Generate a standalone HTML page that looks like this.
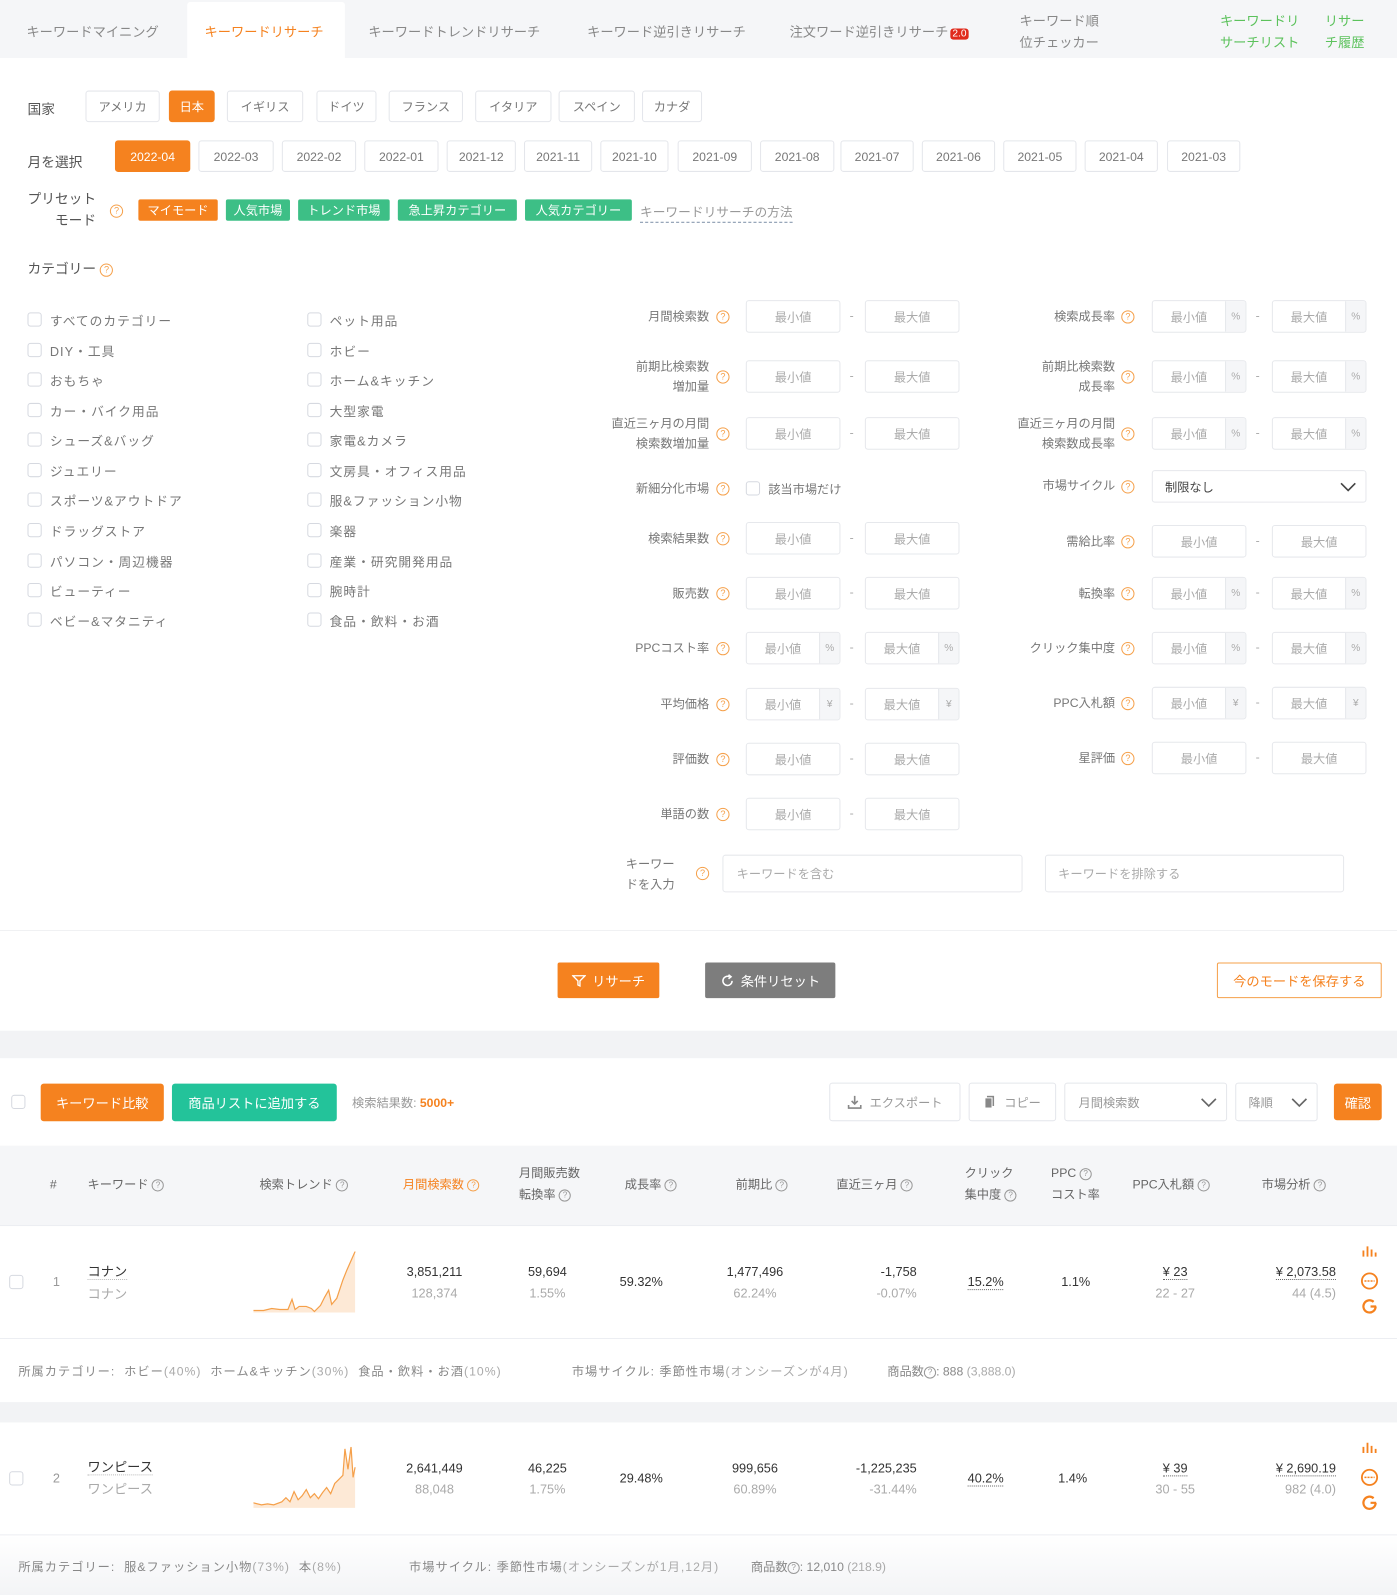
<!DOCTYPE html>
<html><head><meta charset="utf-8">
<style>
*{box-sizing:border-box;margin:0;padding:0}
html,body{width:1397px;height:1595px;overflow:hidden;background:#fff}
body{font-family:"Liberation Sans","Noto Sans CJK JP",sans-serif;font-size:12px;color:#666}
#w{position:absolute;left:0;top:0;width:1373px;height:1568px;transform:scale(1.01748);transform-origin:0 0}
.a{position:absolute;white-space:nowrap}
.btn{position:absolute;height:31px;border:1px solid #e4e6eb;border-radius:3px;display:flex;align-items:center;justify-content:center;color:#777;font-size:12px;background:#fff}
.on{background:#f5821f;border-color:#f5821f;color:#fff}
.tg{position:absolute;top:196px;height:21px;color:#fff;font-size:12px;display:flex;align-items:center;justify-content:center;border-radius:2px;background:#3dbf86}
.cb{position:absolute;width:14px;height:14px;border:1px solid #d6d9e0;border-radius:3px;background:#fff}
.ck{position:absolute;font-size:12.5px;color:#777;letter-spacing:1px}
.q{display:inline-block;width:13px;height:13px;border:1px solid #f5a04a;border-radius:50%;color:#f5a04a;font-size:9px;line-height:11px;text-align:center;vertical-align:middle}
.qg{display:inline-block;width:12px;height:12px;border:1px solid #999;border-radius:50%;color:#999;font-size:8px;line-height:10px;text-align:center;vertical-align:middle}
.lb{position:absolute;text-align:right;font-size:12px;color:#777;line-height:20px}
.in{position:absolute;height:32px;border:1px solid #e6e8ec;border-radius:3px;display:flex;align-items:center;justify-content:center;color:#aaa;font-size:12px;background:#fff;overflow:hidden}
.in .s{position:absolute;right:0;top:0;bottom:0;width:20px;background:#f5f6f8;border-left:1px solid #e6e8ec;display:flex;align-items:center;justify-content:center;font-size:10px;color:#aaa}
.d{position:absolute;color:#aaa;font-size:12px}
.th{position:absolute;font-size:12px;color:#666;line-height:21px}
.num{position:absolute;font-size:12.5px;color:#333;line-height:21px}
.sub{color:#aaa}
.dot{border-bottom:1px dotted #666}
.ft{letter-spacing:1px}
</style></head><body><div id="w">

<!-- tabs -->
<div class="a" style="left:0;top:0;width:1373px;height:57px;background:#f5f6f8"></div>
<div class="a" style="left:184px;top:2px;width:155px;height:55px;background:#fff;border-radius:3px 3px 0 0"></div>
<div class="a" style="left:26px;top:21px;font-size:13px;color:#888">キーワードマイニング</div>
<div class="a" style="left:201px;top:21px;font-size:13px;color:#f5821f">キーワードリサーチ</div>
<div class="a" style="left:362px;top:21px;font-size:13px;color:#888">キーワードトレンドリサーチ</div>
<div class="a" style="left:577px;top:21px;font-size:13px;color:#888">キーワード逆引きリサーチ</div>
<div class="a" style="left:776px;top:21px;font-size:13px;color:#888">注文ワード逆引きリサーチ<span style="background:#e02a1c;color:#fff;font-size:10px;border-radius:3px;padding:0 2px;margin-left:2px">2.0</span></div>
<div class="a" style="left:1002px;top:10px;font-size:13px;color:#888;line-height:21px">キーワード順<br>位チェッカー</div>
<div class="a" style="left:1199px;top:10px;font-size:13px;color:#5cc25c;line-height:21px">キーワードリ<br>サーチリスト</div>
<div class="a" style="left:1302px;top:10px;font-size:13px;color:#5cc25c;line-height:21px">リサー<br>チ履歴</div>

<!-- country -->
<div class="a" style="left:27px;top:96px;font-size:13.5px;color:#555">国家</div>
<div class="btn" style="left:84px;top:89px;width:73px">アメリカ</div>
<div class="btn on" style="left:166px;top:89px;width:45px">日本</div>
<div class="btn" style="left:223px;top:89px;width:75px">イギリス</div>
<div class="btn" style="left:311px;top:89px;width:59px">ドイツ</div>
<div class="btn" style="left:382px;top:89px;width:73px">フランス</div>
<div class="btn" style="left:467px;top:89px;width:75px">イタリア</div>
<div class="btn" style="left:549px;top:89px;width:75px">スペイン</div>
<div class="btn" style="left:631px;top:89px;width:59px">カナダ</div>

<!-- months -->
<div class="a" style="left:27px;top:148px;font-size:13.5px;color:#555">月を選択</div>
<div class="btn on" style="left:113px;top:138px;width:74px">2022-04</div>
<div class="btn" style="left:195px;top:138px;width:74px">2022-03</div>
<div class="btn" style="left:277px;top:138px;width:73px">2022-02</div>
<div class="btn" style="left:358px;top:138px;width:73px">2022-01</div>
<div class="btn" style="left:439px;top:138px;width:68px">2021-12</div>
<div class="btn" style="left:515px;top:138px;width:67px">2021-11</div>
<div class="btn" style="left:590px;top:138px;width:67px">2021-10</div>
<div class="btn" style="left:666px;top:138px;width:73px">2021-09</div>
<div class="btn" style="left:747px;top:138px;width:73px">2021-08</div>
<div class="btn" style="left:826px;top:138px;width:72px">2021-07</div>
<div class="btn" style="left:906px;top:138px;width:72px">2021-06</div>
<div class="btn" style="left:986px;top:138px;width:72px">2021-05</div>
<div class="btn" style="left:1066px;top:138px;width:72px">2021-04</div>
<div class="btn" style="left:1147px;top:138px;width:72px">2021-03</div>

<!-- preset -->
<div class="a" style="left:27px;top:185px;font-size:13.5px;color:#555;line-height:21px;text-align:right">プリセット<br>　モード</div>
<div class="a" style="left:108px;top:200px"><span class="q">?</span></div>
<div class="tg" style="left:136px;width:78px;background:#f5821f">マイモード</div>
<div class="tg" style="left:222px;width:63px">人気市場</div>
<div class="tg" style="left:293px;width:90px">トレンド市場</div>
<div class="tg" style="left:391px;width:117px">急上昇カテゴリー</div>
<div class="tg" style="left:516px;width:105px">人気カテゴリー</div>
<div class="a" style="left:629px;top:198px;color:#999;font-size:12.5px;border-bottom:1px dashed #8a9bb0;padding-bottom:1px">キーワードリサーチの方法</div>

<div class="a" style="left:27px;top:253px;font-size:13.5px;color:#555">カテゴリー <span class="q">?</span></div>

<!-- categories -->
<div class="cb" style="left:27px;top:307px"></div><div class="ck" style="left:49px;top:305px">すべてのカテゴリー</div>
<div class="cb" style="left:27px;top:337px"></div><div class="ck" style="left:49px;top:335px">DIY・工具</div>
<div class="cb" style="left:27px;top:366px"></div><div class="ck" style="left:49px;top:364px">おもちゃ</div>
<div class="cb" style="left:27px;top:396px"></div><div class="ck" style="left:49px;top:394px">カー・バイク用品</div>
<div class="cb" style="left:27px;top:425px"></div><div class="ck" style="left:49px;top:423px">シューズ&amp;バッグ</div>
<div class="cb" style="left:27px;top:455px"></div><div class="ck" style="left:49px;top:453px">ジュエリー</div>
<div class="cb" style="left:27px;top:484px"></div><div class="ck" style="left:49px;top:482px">スポーツ&amp;アウトドア</div>
<div class="cb" style="left:27px;top:514px"></div><div class="ck" style="left:49px;top:512px">ドラッグストア</div>
<div class="cb" style="left:27px;top:544px"></div><div class="ck" style="left:49px;top:542px">パソコン・周辺機器</div>
<div class="cb" style="left:27px;top:573px"></div><div class="ck" style="left:49px;top:571px">ビューティー</div>
<div class="cb" style="left:27px;top:602px"></div><div class="ck" style="left:49px;top:600px">ベビー&amp;マタニティ</div>
<div class="cb" style="left:302px;top:307px"></div><div class="ck" style="left:324px;top:305px">ペット用品</div>
<div class="cb" style="left:302px;top:337px"></div><div class="ck" style="left:324px;top:335px">ホビー</div>
<div class="cb" style="left:302px;top:366px"></div><div class="ck" style="left:324px;top:364px">ホーム&amp;キッチン</div>
<div class="cb" style="left:302px;top:396px"></div><div class="ck" style="left:324px;top:394px">大型家電</div>
<div class="cb" style="left:302px;top:425px"></div><div class="ck" style="left:324px;top:423px">家電&amp;カメラ</div>
<div class="cb" style="left:302px;top:455px"></div><div class="ck" style="left:324px;top:453px">文房具・オフィス用品</div>
<div class="cb" style="left:302px;top:484px"></div><div class="ck" style="left:324px;top:482px">服&amp;ファッション小物</div>
<div class="cb" style="left:302px;top:514px"></div><div class="ck" style="left:324px;top:512px">楽器</div>
<div class="cb" style="left:302px;top:544px"></div><div class="ck" style="left:324px;top:542px">産業・研究開発用品</div>
<div class="cb" style="left:302px;top:573px"></div><div class="ck" style="left:324px;top:571px">腕時計</div>
<div class="cb" style="left:302px;top:602px"></div><div class="ck" style="left:324px;top:600px">食品・飲料・お酒</div>

<!-- LEFT filters -->
<div class="lb" style="right:676px;top:301px">月間検索数</div><div class="a" style="left:704px;top:304px"><span class="q">?</span></div>
<div class="in" style="left:733px;top:295px;width:93px">最小値</div><div class="d" style="left:835px;top:303px">-</div><div class="in" style="left:850px;top:295px;width:93px">最大値</div>

<div class="lb" style="right:676px;top:350px">前期比検索数<br>増加量</div><div class="a" style="left:704px;top:363px"><span class="q">?</span></div>
<div class="in" style="left:733px;top:354px;width:93px">最小値</div><div class="d" style="left:835px;top:362px">-</div><div class="in" style="left:850px;top:354px;width:93px">最大値</div>

<div class="lb" style="right:676px;top:406px">直近三ヶ月の月間<br>検索数増加量</div><div class="a" style="left:704px;top:419px"><span class="q">?</span></div>
<div class="in" style="left:733px;top:410px;width:93px">最小値</div><div class="d" style="left:835px;top:418px">-</div><div class="in" style="left:850px;top:410px;width:93px">最大値</div>

<div class="lb" style="right:676px;top:470px">新細分化市場</div><div class="a" style="left:704px;top:473px"><span class="q">?</span></div>
<div class="cb" style="left:733px;top:473px"></div><div class="a" style="left:755px;top:472px;color:#777">該当市場だけ</div>

<div class="lb" style="right:676px;top:519px">検索結果数</div><div class="a" style="left:704px;top:522px"><span class="q">?</span></div>
<div class="in" style="left:733px;top:513px;width:93px">最小値</div><div class="d" style="left:835px;top:521px">-</div><div class="in" style="left:850px;top:513px;width:93px">最大値</div>

<div class="lb" style="right:676px;top:573px">販売数</div><div class="a" style="left:704px;top:576px"><span class="q">?</span></div>
<div class="in" style="left:733px;top:567px;width:93px">最小値</div><div class="d" style="left:835px;top:575px">-</div><div class="in" style="left:850px;top:567px;width:93px">最大値</div>

<div class="lb" style="right:676px;top:627px">PPCコスト率</div><div class="a" style="left:704px;top:630px"><span class="q">?</span></div>
<div class="in" style="left:733px;top:621px;width:93px;padding-right:20px">最小値<span class="s">%</span></div><div class="d" style="left:835px;top:629px">-</div><div class="in" style="left:850px;top:621px;width:93px;padding-right:20px">最大値<span class="s">%</span></div>

<div class="lb" style="right:676px;top:682px">平均価格</div><div class="a" style="left:704px;top:685px"><span class="q">?</span></div>
<div class="in" style="left:733px;top:676px;width:93px;padding-right:20px">最小値<span class="s">¥</span></div><div class="d" style="left:835px;top:684px">-</div><div class="in" style="left:850px;top:676px;width:93px;padding-right:20px">最大値<span class="s">¥</span></div>

<div class="lb" style="right:676px;top:736px">評価数</div><div class="a" style="left:704px;top:739px"><span class="q">?</span></div>
<div class="in" style="left:733px;top:730px;width:93px">最小値</div><div class="d" style="left:835px;top:738px">-</div><div class="in" style="left:850px;top:730px;width:93px">最大値</div>

<div class="lb" style="right:676px;top:790px">単語の数</div><div class="a" style="left:704px;top:793px"><span class="q">?</span></div>
<div class="in" style="left:733px;top:784px;width:93px">最小値</div><div class="d" style="left:835px;top:792px">-</div><div class="in" style="left:850px;top:784px;width:93px">最大値</div>

<div class="lb" style="left:615px;top:839px;text-align:left">キーワー<br>ドを入力</div><div class="a" style="left:684px;top:851px"><span class="q">?</span></div>
<div class="in" style="left:710px;top:840px;width:295px;height:37px;justify-content:flex-start;padding-left:13px">キーワードを含む</div>
<div class="in" style="left:1027px;top:840px;width:294px;height:37px;justify-content:flex-start;padding-left:12px">キーワードを排除する</div>

<!-- RIGHT filters -->
<div class="lb" style="right:277px;top:301px">検索成長率</div><div class="a" style="left:1102px;top:304px"><span class="q">?</span></div>
<div class="in" style="left:1132px;top:295px;width:93px;padding-right:20px">最小値<span class="s">%</span></div><div class="d" style="left:1234px;top:303px">-</div><div class="in" style="left:1250px;top:295px;width:93px;padding-right:20px">最大値<span class="s">%</span></div>

<div class="lb" style="right:277px;top:350px">前期比検索数<br>成長率</div><div class="a" style="left:1102px;top:363px"><span class="q">?</span></div>
<div class="in" style="left:1132px;top:354px;width:93px;padding-right:20px">最小値<span class="s">%</span></div><div class="d" style="left:1234px;top:362px">-</div><div class="in" style="left:1250px;top:354px;width:93px;padding-right:20px">最大値<span class="s">%</span></div>

<div class="lb" style="right:277px;top:406px">直近三ヶ月の月間<br>検索数成長率</div><div class="a" style="left:1102px;top:419px"><span class="q">?</span></div>
<div class="in" style="left:1132px;top:410px;width:93px;padding-right:20px">最小値<span class="s">%</span></div><div class="d" style="left:1234px;top:418px">-</div><div class="in" style="left:1250px;top:410px;width:93px;padding-right:20px">最大値<span class="s">%</span></div>

<div class="lb" style="right:277px;top:467px">市場サイクル</div><div class="a" style="left:1102px;top:471px"><span class="q">?</span></div>
<div class="in" style="left:1132px;top:462px;width:211px;justify-content:flex-start;padding-left:12px;color:#444">制限なし
<svg style="position:absolute;right:8px;top:9px" width="18" height="12" viewBox="0 0 18 12"><path d="M2 3l7 7 7-7" fill="none" stroke="#444" stroke-width="1.6"/></svg></div>

<div class="lb" style="right:277px;top:522px">需給比率</div><div class="a" style="left:1102px;top:525px"><span class="q">?</span></div>
<div class="in" style="left:1132px;top:516px;width:93px">最小値</div><div class="d" style="left:1234px;top:524px">-</div><div class="in" style="left:1250px;top:516px;width:93px">最大値</div>

<div class="lb" style="right:277px;top:573px">転換率</div><div class="a" style="left:1102px;top:576px"><span class="q">?</span></div>
<div class="in" style="left:1132px;top:567px;width:93px;padding-right:20px">最小値<span class="s">%</span></div><div class="d" style="left:1234px;top:575px">-</div><div class="in" style="left:1250px;top:567px;width:93px;padding-right:20px">最大値<span class="s">%</span></div>

<div class="lb" style="right:277px;top:627px">クリック集中度</div><div class="a" style="left:1102px;top:630px"><span class="q">?</span></div>
<div class="in" style="left:1132px;top:621px;width:93px;padding-right:20px">最小値<span class="s">%</span></div><div class="d" style="left:1234px;top:629px">-</div><div class="in" style="left:1250px;top:621px;width:93px;padding-right:20px">最大値<span class="s">%</span></div>

<div class="lb" style="right:277px;top:681px">PPC入札額</div><div class="a" style="left:1102px;top:684px"><span class="q">?</span></div>
<div class="in" style="left:1132px;top:675px;width:93px;padding-right:20px">最小値<span class="s">¥</span></div><div class="d" style="left:1234px;top:683px">-</div><div class="in" style="left:1250px;top:675px;width:93px;padding-right:20px">最大値<span class="s">¥</span></div>

<div class="lb" style="right:277px;top:735px">星評価</div><div class="a" style="left:1102px;top:738px"><span class="q">?</span></div>
<div class="in" style="left:1132px;top:729px;width:93px">最小値</div><div class="d" style="left:1234px;top:737px">-</div><div class="in" style="left:1250px;top:729px;width:93px">最大値</div>

<!-- actions -->
<div class="a" style="left:0;top:914px;width:1373px;height:1px;background:#f0f1f3"></div>
<div class="btn on" style="left:548px;top:946px;width:100px;height:35px;font-size:13px;border-radius:2px">
<svg width="14" height="14" viewBox="0 0 14 14" style="margin-right:6px"><path d="M1 2h12l-5 5v5l-2-1V7z" fill="none" stroke="#fff" stroke-width="1.3"/></svg>リサーチ</div>
<div class="btn" style="left:693px;top:946px;width:128px;height:35px;background:#7d7d7d;border-color:#7d7d7d;color:#fff;font-size:13px;border-radius:2px">
<svg width="14" height="14" viewBox="0 0 14 14" style="margin-right:6px"><path d="M11.5 7A4.5 4.5 0 1 1 9 3" fill="none" stroke="#fff" stroke-width="1.5"/><path d="M8 1l2.5 2L8 5" fill="none" stroke="#fff" stroke-width="1.5"/></svg>条件リセット</div>
<div class="btn" style="left:1196px;top:946px;width:162px;height:35px;border-color:#f5a04a;color:#f5821f;font-size:13px;border-radius:2px">今のモードを保存する</div>

<div class="a" style="left:0;top:1013px;width:1373px;height:27px;background:#f2f3f5"></div>

<!-- toolbar -->
<div class="cb" style="left:11px;top:1076px"></div>
<div class="btn on" style="left:40px;top:1065px;width:121px;height:37px;font-size:13px">キーワード比較</div>
<div class="btn" style="left:169px;top:1065px;width:162px;height:37px;background:#23c39a;border-color:#23c39a;color:#fff;font-size:13px">商品リストに追加する</div>
<div class="a" style="left:346px;top:1075px;color:#999">検索結果数: <b style="color:#f5821f">5000+</b></div>
<div class="btn" style="left:815px;top:1064px;width:129px;height:38px;color:#999">
<svg width="14" height="14" viewBox="0 0 14 14" style="margin-right:8px"><path d="M7 1v8M4 6l3 3 3-3" fill="none" stroke="#888" stroke-width="1.6"/><path d="M1 10v3h12v-3" fill="none" stroke="#888" stroke-width="1.6"/></svg>エクスポート</div>
<div class="btn" style="left:952px;top:1064px;width:86px;height:38px;color:#999">
<svg width="12" height="14" viewBox="0 0 12 14" style="margin-right:8px"><rect x="3" y="1" width="7" height="10" fill="#888"/><rect x="1" y="3" width="7" height="10" fill="#888" stroke="#fff"/></svg>コピー</div>
<div class="btn" style="left:1046px;top:1064px;width:160px;height:38px;justify-content:flex-start;padding-left:13px;color:#999">月間検索数
<svg style="position:absolute;right:8px;top:12px" width="18" height="12" viewBox="0 0 18 12"><path d="M2 3l7 7 7-7" fill="none" stroke="#666" stroke-width="1.6"/></svg></div>
<div class="btn" style="left:1214px;top:1064px;width:81px;height:38px;justify-content:flex-start;padding-left:12px;color:#999">降順
<svg style="position:absolute;right:8px;top:12px" width="18" height="12" viewBox="0 0 18 12"><path d="M2 3l7 7 7-7" fill="none" stroke="#666" stroke-width="1.6"/></svg></div>
<div class="btn on" style="left:1311px;top:1065px;width:47px;height:36px;font-size:13px">確認</div>

<!-- table header -->
<div class="a" style="left:0;top:1126px;width:1373px;height:79px;background:#f5f6f8;border-bottom:1px solid #eceef2"></div>
<div class="th" style="left:49px;top:1154px">#</div>
<div class="th" style="left:86px;top:1154px">キーワード <span class="qg">?</span></div>
<div class="th" style="left:255px;top:1154px">検索トレンド <span class="qg">?</span></div>
<div class="th" style="left:396px;top:1154px;color:#f5821f">月間検索数 <span class="qg" style="border-color:#f5a04a;color:#f5a04a">?</span></div>
<div class="th" style="left:510px;top:1143px">月間販売数<br>転換率 <span class="qg">?</span></div>
<div class="th" style="left:614px;top:1154px">成長率 <span class="qg">?</span></div>
<div class="th" style="left:723px;top:1154px">前期比 <span class="qg">?</span></div>
<div class="th" style="left:822px;top:1154px">直近三ヶ月 <span class="qg">?</span></div>
<div class="th" style="left:948px;top:1143px">クリック<br>集中度 <span class="qg">?</span></div>
<div class="th" style="left:1033px;top:1143px">PPC <span class="qg">?</span><br>コスト率</div>
<div class="th" style="left:1113px;top:1154px">PPC入札額 <span class="qg">?</span></div>
<div class="th" style="left:1240px;top:1154px">市場分析 <span class="qg">?</span></div>

<!-- row 1 -->
<div class="cb" style="left:9px;top:1253px"></div>
<div class="num" style="left:52px;top:1250px;color:#999">1</div>
<div class="num" style="left:86px;top:1239px;line-height:22px;font-size:13px"><span class="dot" style="border-color:#bbb">コナン</span><br><span class="sub">コナン</span></div>
<svg class="a" style="left:249px;top:1230px" width="102" height="62" viewBox="0 0 102 62"><path d="M0 58L10 58L18 56L26 57L34 57L38 47L41 57L45 54L52 54L57 56L60 59L66 53L70 45L74 38L77 52L82 46L88 28L92 18L100 0L100 60L0 60Z" fill="#fde9d6"/><path d="M0 58L10 58L18 56L26 57L34 57L38 47L41 57L45 54L52 54L57 56L60 59L66 53L70 45L74 38L77 52L82 46L88 28L92 18L100 0" fill="none" stroke="#f5a04a" stroke-width="1.2"/></svg>
<div class="num" style="left:388px;top:1240px;text-align:center;width:78px">3,851,211<br><span class="sub">128,374</span></div>
<div class="num" style="left:505px;top:1240px;text-align:center;width:66px">59,694<br><span class="sub">1.55%</span></div>
<div class="num" style="left:609px;top:1250px">59.32%</div>
<div class="num" style="left:706px;top:1240px;text-align:center;width:72px">1,477,496<br><span class="sub">62.24%</span></div>
<div class="num" style="left:820px;top:1240px;text-align:right;width:81px">-1,758<br><span class="sub">-0.07%</span></div>
<div class="num" style="left:951px;top:1250px"><span class="dot">15.2%</span></div>
<div class="num" style="left:1043px;top:1250px">1.1%</div>
<div class="num" style="left:1125px;top:1240px;text-align:center;width:60px"><span class="dot">¥ 23</span><br><span class="sub">22 - 27</span></div>
<div class="num" style="left:1213px;top:1240px;text-align:right;width:100px"><span class="dot">¥ 2,073.58</span><br><span class="sub">44 (4.5)</span></div>
<svg class="a" style="left:1337px;top:1221px" width="20" height="76" viewBox="0 0 20 76"><path d="M3 14V8M7 14V4M11 14V7M15 14V10" stroke="#f5821f" stroke-width="1.8"/><circle cx="9" cy="38" r="7.5" fill="none" stroke="#f5821f" stroke-width="1.8"/><path d="M4 38h10" stroke="#f5821f" stroke-width="1.4" stroke-dasharray="2 1"/><path d="M15 63a6 6 0 1 1-2-4.5M10 63h5.5" fill="none" stroke="#f5821f" stroke-width="2.2"/></svg>
<div class="a" style="left:0;top:1315px;width:1373px;height:1px;background:#eceef2"></div>
<div class="a ft" style="left:18px;top:1339px;color:#888;font-size:12px">所属カテゴリー:&nbsp; ホビー<span class="sub">(40%)</span>&nbsp; ホーム&amp;キッチン<span class="sub">(30%)</span>&nbsp; 食品・飲料・お酒<span class="sub">(10%)</span></div>
<div class="a ft" style="left:562px;top:1339px;color:#888">市場サイクル: 季節性市場<span class="sub">(オンシーズンが4月)</span></div>
<div class="a" style="left:872px;top:1339px;color:#888">商品数<span class="qg">?</span>: 888 <span class="sub">(3,888.0)</span></div>

<div class="a" style="left:0;top:1378px;width:1373px;height:20px;background:#f2f3f5"></div>

<!-- row 2 -->
<div class="cb" style="left:9px;top:1446px"></div>
<div class="num" style="left:52px;top:1443px;color:#999">2</div>
<div class="num" style="left:86px;top:1431px;line-height:22px;font-size:13px"><span class="dot" style="border-color:#bbb">ワンピース</span><br><span class="sub">ワンピース</span></div>
<svg class="a" style="left:249px;top:1422px" width="102" height="62" viewBox="0 0 102 62"><path d="M0 55L8 57L14 56L20 57L28 54L32 50L36 54L40 44L44 52L48 48L52 42L56 50L60 46L64 51L68 45L72 40L76 46L80 36L84 32L88 28L90 2L93 22L96 0L98 30L100 20L100 60L0 60Z" fill="#fde9d6"/><path d="M0 55L8 57L14 56L20 57L28 54L32 50L36 54L40 44L44 52L48 48L52 42L56 50L60 46L64 51L68 45L72 40L76 46L80 36L84 32L88 28L90 2L93 22L96 0L98 30L100 20" fill="none" stroke="#f5a04a" stroke-width="1.2"/></svg>
<div class="num" style="left:388px;top:1433px;text-align:center;width:78px">2,641,449<br><span class="sub">88,048</span></div>
<div class="num" style="left:505px;top:1433px;text-align:center;width:66px">46,225<br><span class="sub">1.75%</span></div>
<div class="num" style="left:609px;top:1443px">29.48%</div>
<div class="num" style="left:706px;top:1433px;text-align:center;width:72px">999,656<br><span class="sub">60.89%</span></div>
<div class="num" style="left:820px;top:1433px;text-align:right;width:81px">-1,225,235<br><span class="sub">-31.44%</span></div>
<div class="num" style="left:951px;top:1443px"><span class="dot">40.2%</span></div>
<div class="num" style="left:1040px;top:1443px">1.4%</div>
<div class="num" style="left:1125px;top:1433px;text-align:center;width:60px"><span class="dot">¥ 39</span><br><span class="sub">30 - 55</span></div>
<div class="num" style="left:1213px;top:1433px;text-align:right;width:100px"><span class="dot">¥ 2,690.19</span><br><span class="sub">982 (4.0)</span></div>
<svg class="a" style="left:1337px;top:1414px" width="20" height="76" viewBox="0 0 20 76"><path d="M3 14V8M7 14V4M11 14V7M15 14V10" stroke="#f5821f" stroke-width="1.8"/><circle cx="9" cy="38" r="7.5" fill="none" stroke="#f5821f" stroke-width="1.8"/><path d="M4 38h10" stroke="#f5821f" stroke-width="1.4" stroke-dasharray="2 1"/><path d="M15 63a6 6 0 1 1-2-4.5M10 63h5.5" fill="none" stroke="#f5821f" stroke-width="2.2"/></svg>
<div class="a" style="left:0;top:1508px;width:1373px;height:60px;background:linear-gradient(#fff,#f3f4f6);border-top:1px solid #eceef2"></div>
<div class="a ft" style="left:18px;top:1531px;color:#888">所属カテゴリー:&nbsp; 服&amp;ファッション小物<span class="sub">(73%)</span>&nbsp; 本<span class="sub">(8%)</span></div>
<div class="a ft" style="left:402px;top:1531px;color:#888">市場サイクル: 季節性市場<span class="sub">(オンシーズンが1月,12月)</span></div>
<div class="a" style="left:738px;top:1531px;color:#888">商品数<span class="qg">?</span>: 12,010 <span class="sub">(218.9)</span></div>

</div></body></html>
